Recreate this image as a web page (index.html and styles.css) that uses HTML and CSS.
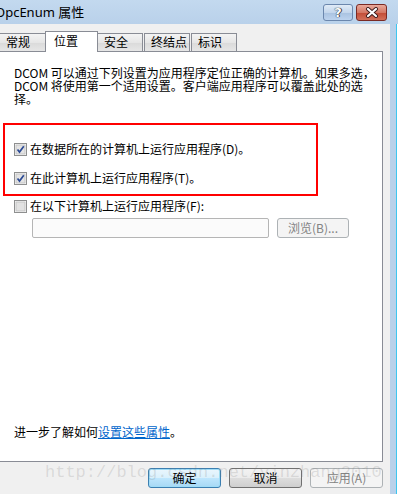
FILE: index.html
```html
<!DOCTYPE html>
<html lang="zh-CN">
<head>
  <meta charset="UTF-8" />
  <title>OpcEnum 属性</title>
  <link rel="stylesheet" href="styles.css">
</head>
<body>
  <div class="window">
    <div class="titlebar">
      <span class="title">OpcEnum 属性</span>
      <div class="caption-btns">
        <span class="cap help">?</span>
        <span class="cap close">
          <svg width="14" height="11" viewBox="0 0 14 11">
            <path d="M3 2 L11 9 M11 2 L3 9" stroke="#3b1a1a" stroke-width="4" stroke-linecap="round"/>
            <path d="M3 2 L11 9 M11 2 L3 9" stroke="#fff" stroke-width="2.2" stroke-linecap="round"/>
          </svg>
        </span>
      </div>
    </div>

    <div class="main">
      <div class="dialog">
        <div class="tabs">
          <div class="tab first">常规</div>
          <div class="tab active">位置</div>
          <div class="tab">安全</div>
          <div class="tab">终结点</div>
          <div class="tab">标识</div>
        </div>

        <div class="panel">
          <p class="intro">DCOM 可以通过下列设置为应用程序定位正确的计算机。如果多选，<br>DCOM 将使用第一个适用设置。客户端应用程序可以覆盖此处的选<br>择。</p>

          <div class="redbox">
            <label class="check-row">
              <svg class="checkbox" width="13" height="13" viewBox="0 0 13 13">
                <rect x="0.5" y="0.5" width="12" height="12" fill="#fff" stroke="#8e8f8f"/>
                <rect x="2" y="2" width="9" height="9" fill="#e4e4e4" stroke="#c4c4c4"/>
                <path d="M3.5 6.5 L5.5 9 L9.8 3.2" fill="none" stroke="#2b4a94" stroke-width="1.7"/>
              </svg>
              <span>在数据所在的计算机上运行应用程序(D)。</span>
            </label>
            <label class="check-row">
              <svg class="checkbox" width="13" height="13" viewBox="0 0 13 13">
                <rect x="0.5" y="0.5" width="12" height="12" fill="#fff" stroke="#8e8f8f"/>
                <rect x="2" y="2" width="9" height="9" fill="#e4e4e4" stroke="#c4c4c4"/>
                <path d="M3.5 6.5 L5.5 9 L9.8 3.2" fill="none" stroke="#2b4a94" stroke-width="1.7"/>
              </svg>
              <span>在此计算机上运行应用程序(T)。</span>
            </label>
          </div>

          <label class="check-row other">
            <svg class="checkbox" width="13" height="13" viewBox="0 0 13 13">
              <rect x="0.5" y="0.5" width="12" height="12" fill="#fff" stroke="#8e8f8f"/>
              <rect x="2" y="2" width="9" height="9" fill="#e2e2e2" stroke="#c4c4c4"/>
            </svg>
            <span>在以下计算机上运行应用程序(F):</span>
          </label>

          <div class="machine-row">
            <div class="machine-input"></div>
            <div class="btn disabled browse">浏览(B)...</div>
          </div>

          <p class="more">进一步了解如何<a href="#">设置这些属性</a>。</p>
        </div>

        <div class="buttons">
          <div class="btn default">确定</div>
          <div class="btn">取消</div>
          <div class="btn disabled">应用(A)</div>
        </div>
      </div>
      <div class="edge"></div>
    </div>

    <div class="watermark">http://blog.csdn.net/yinzhang2010</div>
  </div>
</body>
</html>
```

FILE: styles.css
```css
body {
  margin: 0;
  font-family: "Noto Sans CJK SC", "Noto Sans", sans-serif;
  font-size: 12px;
  color: #000;
  background: #f0f0f0;
  overflow: hidden;
}
.window {
  position: relative;
  width: 398px;
  height: 494px;
  overflow: hidden;
}
.titlebar {
  height: 24px;
  display: flex;
  align-items: flex-start;
  justify-content: space-between;
  background: linear-gradient(#c3d9ef, #b9d1ea);
}
.title {
  margin-left: -5px;
  margin-top: 4px;
  font-size: 13px;
  line-height: 17px;
  font-family: "Noto Sans", "Noto Sans CJK SC", sans-serif;
}
.caption-btns {
  display: flex;
  gap: 3px;
  margin-top: 4px;
  margin-right: 11px;
}
.cap {
  height: 15px;
  border-radius: 3px;
  display: flex;
  align-items: center;
  justify-content: center;
}
.help {
  width: 28px;
  border: 1px solid #6b87ad;
  background: linear-gradient(#e0ebf7 0%, #c3d6ec 50%, #a9c2e0 51%, #bcd3ee 100%);
  color: #fff;
  font: bold 13px "DejaVu Sans", sans-serif;
  text-shadow: 0 0 1px #333, 0 0 1px #333, 1px 0 0 #445;
}
.close {
  width: 29px;
  border: 1px solid #7a2a24;
  background: linear-gradient(#e9a99b 0%, #d47865 50%, #c24b35 51%, #d2705a 100%);
}
.main {
  display: flex;
  height: 470px;
}
.dialog {
  flex: 1;
  display: flex;
  flex-direction: column;
}
.edge {
  width: 8px;
  background: linear-gradient(to right, #b9d1ea 0, #b9d1ea 6px, #3ec6ef 6px, #3ec6ef 7px, #fff 7px);
}
.tabs {
  height: 27px;
  display: flex;
  align-items: flex-end;
  position: relative;
  z-index: 1;
}
.tab {
  box-sizing: border-box;
  width: 46px;
  height: 18px;
  padding-left: 6px;
  line-height: 16px;
  border: 1px solid #898c95;
  border-bottom: none;
  background: linear-gradient(#f3f3f3, #e6e6e6 50%, #dadada 51%, #e6e6e6);
  margin-right: 1px;
}
.tab.first {
  margin-left: -1px;
  width: 47px;
}
.tab.active {
  width: 53px;
  height: 21px;
  margin: 0 -1px -1px -2px;
  padding-left: 8px;
  line-height: 18px;
  background: #fff;
}
.panel {
  box-sizing: border-box;
  height: 411px;
  margin: 0 7px 0 -1px;
  border: 1px solid #898c95;
  background: #fff;
  padding: 14px 0 22px 14px;
  display: flex;
  flex-direction: column;
}
.intro {
  margin: 0;
  line-height: 13px;
  font-size: 12px;
  white-space: nowrap;
}
.redbox {
  box-sizing: border-box;
  width: 315px;
  margin: 18px 0 0 -11px;
  padding: 17px 0 9px 9px;
  border: 2px solid #ff0000;
  display: flex;
  flex-direction: column;
  gap: 15px;
}
.check-row {
  display: flex;
  align-items: center;
  gap: 3px;
  height: 14px;
  line-height: 14px;
}
.checkbox {
  flex: none;
}
.other {
  margin-top: 3px;
}
.machine-row {
  display: flex;
  gap: 8px;
  margin: 5px 0 0 18px;
}
.machine-input {
  box-sizing: border-box;
  width: 237px;
  height: 20px;
  border: 1px solid #b5b5b5;
  border-radius: 2px;
  background: #fbfbfb;
}
.more {
  margin: auto 0 0 0;
  line-height: 14px;
}
.more a {
  color: #0066cc;
}
.buttons {
  display: flex;
  justify-content: flex-end;
  gap: 8px;
  padding: 6px 7px 0 0;
}
.btn {
  box-sizing: border-box;
  width: 73px;
  height: 20px;
  border: 1px solid #707070;
  border-radius: 3px;
  background: linear-gradient(#f2f2f2, #ebebeb 50%, #dddddd 51%, #cfcfcf);
  text-align: center;
  line-height: 18px;
}
.btn.default {
  border-color: #3c7fb1;
  background: linear-gradient(#eaf6fd, #d9f0fc 50%, #bee6fd 51%, #a7d9f5);
  box-shadow: inset 0 0 0 1px #9fdcf7;
}
.btn.disabled {
  border-color: #adb2b5;
  background: #f4f4f4;
  color: #838383;
}
.browse {
  width: 72px;
}
.watermark {
  position: absolute;
  left: 45px;
  top: 463px;
  font-family: "Liberation Mono", monospace;
  font-size: 17px;
  line-height: 20px;
  color: rgba(120, 120, 120, 0.2);
  white-space: nowrap;
  pointer-events: none;
}
```
